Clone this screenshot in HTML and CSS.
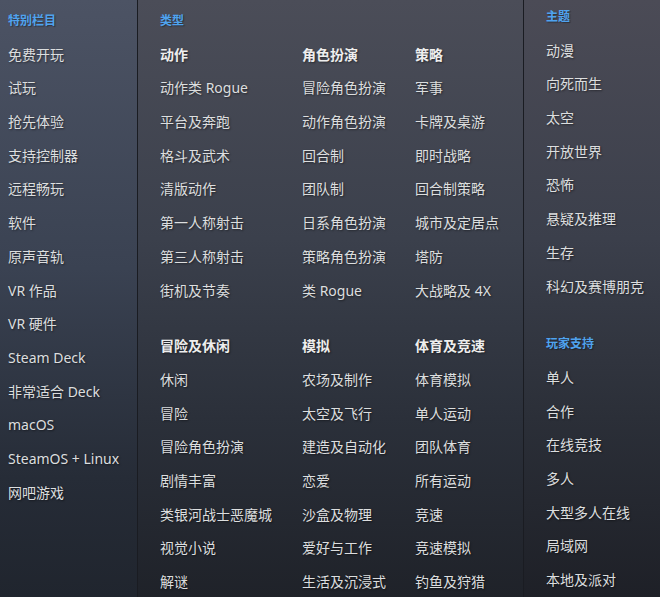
FILE: index.html
```html
<!DOCTYPE html>
<html lang="zh-CN">
<head>
<meta charset="utf-8">
<title>Steam 类别</title>
<link rel="stylesheet" href="styles.css">
</head>
<body>
<div class="menu">
  <div class="col left">
    <div class="head">特别栏目</div>
    <div class="item">免费开玩</div>
    <div class="item">试玩</div>
    <div class="item">抢先体验</div>
    <div class="item">支持控制器</div>
    <div class="item">远程畅玩</div>
    <div class="item">软件</div>
    <div class="item">原声音轨</div>
    <div class="item">VR 作品</div>
    <div class="item">VR 硬件</div>
    <div class="item">Steam Deck</div>
    <div class="item">非常适合 Deck</div>
    <div class="item">macOS</div>
    <div class="item">SteamOS + Linux</div>
    <div class="item">网吧游戏</div>
  </div>
  <div class="col main">
    <div class="head">类型</div>
    <div class="grid">
      <div class="group">
        <div class="sub">动作</div>
        <div class="item">动作类 Rogue</div>
        <div class="item">平台及奔跑</div>
        <div class="item">格斗及武术</div>
        <div class="item">清版动作</div>
        <div class="item">第一人称射击</div>
        <div class="item">第三人称射击</div>
        <div class="item">街机及节奏</div>
      </div>
      <div class="group">
        <div class="sub">角色扮演</div>
        <div class="item">冒险角色扮演</div>
        <div class="item">动作角色扮演</div>
        <div class="item">回合制</div>
        <div class="item">团队制</div>
        <div class="item">日系角色扮演</div>
        <div class="item">策略角色扮演</div>
        <div class="item">类 Rogue</div>
      </div>
      <div class="group">
        <div class="sub">策略</div>
        <div class="item">军事</div>
        <div class="item">卡牌及桌游</div>
        <div class="item">即时战略</div>
        <div class="item">回合制策略</div>
        <div class="item">城市及定居点</div>
        <div class="item">塔防</div>
        <div class="item">大战略及 4X</div>
      </div>
      <div class="group">
        <div class="sub">冒险及休闲</div>
        <div class="item">休闲</div>
        <div class="item">冒险</div>
        <div class="item">冒险角色扮演</div>
        <div class="item">剧情丰富</div>
        <div class="item">类银河战士恶魔城</div>
        <div class="item">视觉小说</div>
        <div class="item">解谜</div>
      </div>
      <div class="group">
        <div class="sub">模拟</div>
        <div class="item">农场及制作</div>
        <div class="item">太空及飞行</div>
        <div class="item">建造及自动化</div>
        <div class="item">恋爱</div>
        <div class="item">沙盒及物理</div>
        <div class="item">爱好与工作</div>
        <div class="item">生活及沉浸式</div>
      </div>
      <div class="group">
        <div class="sub">体育及竞速</div>
        <div class="item">体育模拟</div>
        <div class="item">单人运动</div>
        <div class="item">团队体育</div>
        <div class="item">所有运动</div>
        <div class="item">竞速</div>
        <div class="item">竞速模拟</div>
        <div class="item">钓鱼及狩猎</div>
      </div>
    </div>
  </div>
  <div class="col right">
    <div class="section">
      <div class="head">主题</div>
      <div class="item">动漫</div>
      <div class="item">向死而生</div>
      <div class="item">太空</div>
      <div class="item">开放世界</div>
      <div class="item">恐怖</div>
      <div class="item">悬疑及推理</div>
      <div class="item">生存</div>
      <div class="item">科幻及赛博朋克</div>
    </div>
    <div class="section">
      <div class="head">玩家支持</div>
      <div class="item">单人</div>
      <div class="item">合作</div>
      <div class="item">在线竞技</div>
      <div class="item">多人</div>
      <div class="item">大型多人在线</div>
      <div class="item">局域网</div>
      <div class="item">本地及派对</div>
    </div>
  </div>
</div>
</body>
</html>
```

FILE: styles.css
```css
html, body {
  margin: 0;
  padding: 0;
  background: #1e2128;
}

body {
  font-family: "Noto Sans", "Noto Sans CJK SC", sans-serif;
  width: 660px;
  height: 597px;
  overflow: hidden;
}

.menu {
  display: flex;
  height: 597px;
}

.col {
  box-sizing: border-box;
  height: 100%;
}

.left {
  width: 138px;
  flex: none;
  padding: 4px 0 0 8px;
  background: linear-gradient(to bottom, #4c5364 0%, #3a4252 45%, #262c37 80%, #20252e 100%);
  border-right: 1px solid #1a1c22;
}

.main {
  width: 386px;
  flex: none;
  padding: 4px 0 0 22px;
  background: linear-gradient(to bottom, #4b4d58 0%, #3b404c 40%, #2b303a 70%, #1f2229 100%);
  border-right: 1px solid #1a1c22;
}

.right {
  flex: 1;
  padding: 0 0 0 22px;
  background: linear-gradient(to bottom, #4b4b56 0%, #3b3f4b 40%, #2b2f38 70%, #1e2027 100%);
  display: flex;
  flex-direction: column;
  gap: 24px;
}

.head {
  height: 33.7px;
  line-height: 33.7px;
  font-size: 12px;
  font-weight: 700;
  color: #4fa3ef;
  text-shadow: 1px 1px 1px rgba(0, 0, 0, 0.35);
  white-space: nowrap;
}

.item, .sub {
  height: 33.7px;
  line-height: 33.7px;
  font-size: 14px;
  color: #dcdedf;
  white-space: nowrap;
  text-shadow: 1px 1px 2px rgba(0, 0, 0, 0.45);
}

.sub {
  font-weight: 700;
  color: #eeeeee;
}

.grid {
  display: grid;
  grid-template-columns: 142px 113px auto;
  row-gap: 22px;
}
```
